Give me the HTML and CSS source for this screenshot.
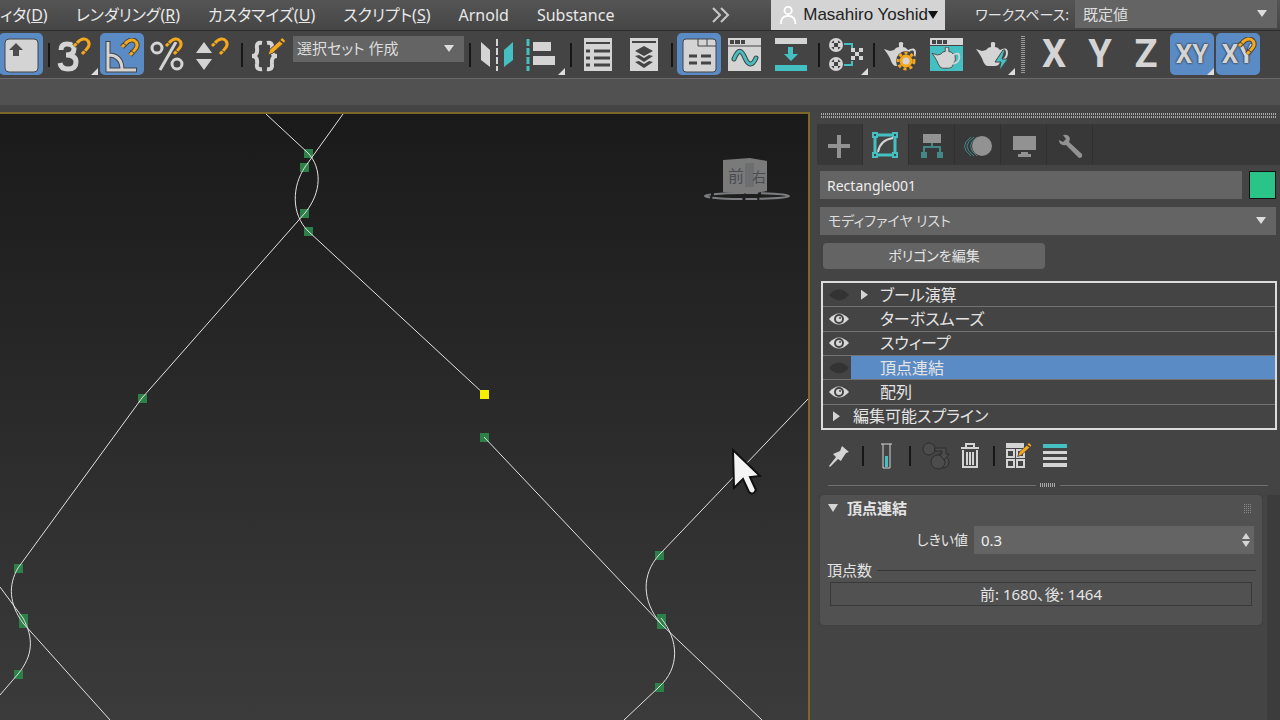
FILE: index.html
```html
<!DOCTYPE html>
<html lang="ja">
<head>
  <meta charset="UTF-8">
  <meta name="viewport" content="width=device-width, initial-scale=1.0">
  <title>Rectangle001</title>
  <link rel="stylesheet" href="styles.css">
</head>
<body>
  <!-- shared icon parts -->
  <svg class="defs" aria-hidden="true">
    <symbol id="magnet" viewBox="0 0 20 20">
      <path class="halo" d="M2 9 L5 6 C9 1 14 1 16 4 C19 8 16 11 10 17"/>
      <path class="magnet" d="M2 9 L5 6 C9 1 14 1 16 4 C19 8 16 11 10 17"/>
      <path class="tick" d="M3 5 L7 8 M10 12 L14 15"/>
    </symbol>
    <symbol id="pencil" viewBox="0 0 20 20">
      <path fill="#f5a81c" stroke="#444" d="M1 18 L3 12 L13 3 L17 6 L6 16 Z"/>
      <path fill="#f5a81c" d="M14 2 L16 0 L19 3 L18 5 Z"/>
    </symbol>
    <symbol id="teapot" viewBox="0 0 34 26">
      <path fill="#d4d4d4" d="M0 7 L6 9 L10 8 Q12 5 15 5 V3 Q14 0 17 0 Q20 0 19 3 V5 Q22 5 24 8 L26 9 Q28 15 24 20 Q23 24 19 24 H12 Q9 24 7 19 Q6 15 0 7 Z"/>
      <path fill="none" stroke="#d4d4d4" stroke-width="2" d="M24 9 Q31 5 31 11 Q31 17 24 19"/>
    </symbol>
    <symbol id="eye" viewBox="0 0 20 14">
      <path fill="#d8d8d8" d="M0 7 Q10 -4 20 7 Q10 18 0 7 Z"/>
      <circle cx="10" cy="7" r="5" fill="#444"/>
      <circle cx="10" cy="7" r="3" fill="#d8d8d8"/>
      <circle cx="11" cy="6" r="1" fill="#444"/>
    </symbol>
    <symbol id="eye-off" viewBox="0 0 22 14">
      <path fill="#333" d="M0 7 Q11 -5 22 7 Q11 19 0 7 Z"/>
    </symbol>
  </svg>

  <header class="menubar">
    <nav class="menus">
      <a href="#">ィタ(<u>D</u>)</a>
      <a href="#">レンダリング(<u>R</u>)</a>
      <a href="#">カスタマイズ(<u>U</u>)</a>
      <a href="#">スクリプト(<u>S</u>)</a>
      <a href="#">Arnold</a>
      <a href="#">Substance</a>
    </nav>
    <button type="button" class="more" aria-label="more">
      <svg width="20" height="18" viewBox="0 0 20 18"><path class="line" d="M2 2 L9 9 L2 16 M10 2 L17 9 L10 16"/></svg>
    </button>
    <button type="button" class="user">
      <svg width="20" height="20" viewBox="0 0 20 20"><g fill="none" stroke="#fff" stroke-width="2"><circle cx="10" cy="5" r="4"/><path d="M2 20 Q2 11 10 11 Q18 11 18 20"/></g></svg>
      <span class="user-name">Masahiro Yoshid</span>
      <i class="arrow dark"></i>
    </button>
    <label class="workspace-label" for="workspace">ワークスペース:</label>
    <div class="select workspace">
      <select id="workspace"><option>既定値</option></select>
    </div>
  </header>

  <div class="toolbar">
    <button type="button" class="tool first on" aria-label="viewport">
      <svg viewBox="0 0 44 42"><rect x="6" y="6" width="33" height="33" rx="4" fill="#d4d4d4" stroke="#444"/><path fill="#4c4c4c" d="M17 10 L24 17 H20 V23 H14 V17 H10 Z"/></svg>
    </button>
    <i class="sep"></i>
    <button type="button" class="tool" aria-label="snap">
      <svg viewBox="0 0 44 42"><path class="fat" d="M7 17 Q7 11 13 11 Q20 11 20 16 Q20 22 12 22 Q22 22 22 29 Q22 36 14 36 Q7 36 6 30"/><use href="#magnet" x="18" y="4" width="20" height="20"/><path class="corner" d="M44 35 V42 H37 Z"/></svg>
    </button>
    <button type="button" class="tool on" aria-label="angle snap">
      <svg viewBox="0 0 44 42"><path class="halo" d="M8 8 V37 H37 M8 22 Q22 22 22 37"/><path class="pale" d="M8 9 V37 H36 M8 22 Q22 22 22 37"/><use href="#magnet" x="20" y="5" width="20" height="20"/></svg>
    </button>
    <button type="button" class="tool" aria-label="percent snap">
      <svg viewBox="0 0 44 42"><g fill="none" stroke="#d4d4d4" stroke-width="3"><circle cx="11" cy="15" r="5"/><circle cx="31" cy="31" r="5"/><path d="M30 9 L14 37"/></g><use href="#magnet" x="18" y="4" width="20" height="20"/></svg>
    </button>
    <button type="button" class="tool" aria-label="spinner snap">
      <svg viewBox="0 0 44 42"><path fill="#d4d4d4" d="M4 20 H20 L12 9 Z M4 26 H20 L12 37 Z"/><use href="#magnet" x="18" y="4" width="20" height="20"/></svg>
    </button>
    <i class="sep"></i>
    <button type="button" class="tool" aria-label="named selection">
      <svg viewBox="0 0 44 42"><g fill="none" stroke="#d4d4d4" stroke-width="4"><path d="M15 10 Q9 9 10 15 Q11 23 5 23 Q11 23 10 31 Q9 37 15 36"/><path d="M20 10 Q26 9 25 15 Q24 23 30 23 Q24 23 25 31 Q26 37 20 36"/></g><use href="#pencil" x="20" y="5" width="19" height="19"/></svg>
    </button>
    <div class="select selection-set">
      <select aria-label="選択セット"><option>選択セット 作成</option></select>
    </div>
    <i class="sep"></i>
    <button type="button" class="tool" aria-label="mirror">
      <svg viewBox="0 0 44 42"><path fill="#d4d4d4" d="M6 9 L15 17 V34 L6 27 Z"/><path fill="#45c0c2" d="M38 9 L29 17 V34 L38 27 Z"/><path stroke="#d4d4d4" stroke-width="2" stroke-dasharray="7 2" d="M22 6 V38"/></svg>
    </button>
    <button type="button" class="tool" aria-label="align">
      <svg viewBox="0 0 44 42"><path stroke="#45c0c2" stroke-width="3" stroke-dasharray="7 2" d="M7 6 V38"/><path fill="#d4d4d4" d="M12 9 H30 V18 H12 Z M12 23 H34 V32 H12 Z"/><path class="corner" d="M44 35 V42 H37 Z"/></svg>
    </button>
    <i class="sep"></i>
    <button type="button" class="tool" aria-label="scene explorer">
      <svg viewBox="0 0 44 42"><path fill="#d4d4d4" d="M8 5 H36 V38 H8 Z"/><path stroke="#444" stroke-width="2" d="M10 10 H34"/><path stroke="#444" stroke-width="3" d="M10 18 H14 M18 18 H34 M10 25 H14 M18 25 H34 M10 32 H14 M18 32 H34"/></svg>
    </button>
    <button type="button" class="tool" aria-label="layer explorer">
      <svg viewBox="0 0 44 42"><path fill="#d4d4d4" d="M8 5 H36 V38 H8 Z"/><path stroke="#444" stroke-width="2" d="M10 9 H34"/><path fill="#444" d="M22 13 L31 18 L22 23 L13 18 Z M13 23 L17 22 L22 25 L27 22 L31 23 L22 29 Z M13 29 L17 28 L22 31 L27 28 L31 29 L22 35 Z"/></svg>
    </button>
    <i class="sep"></i>
    <button type="button" class="tool on" aria-label="ribbon">
      <svg viewBox="0 0 44 42"><rect x="6" y="6" width="33" height="33" rx="3" fill="#d4d4d4" stroke="#444"/><path fill="none" stroke="#444" d="M21 6 V13 H39 M30 6 V13"/><path stroke="#444" stroke-width="3" d="M12 23 H20 M24 23 H34 M12 30 H20 M24 30 H34"/></svg>
    </button>
    <button type="button" class="tool" aria-label="curve editor">
      <svg viewBox="0 0 44 42"><path fill="#d4d4d4" d="M5 5 H38 V38 H5 Z"/><path fill="#444" d="M7 7 H11 V11 H7 Z M12 7 H17 V11 H12 Z M18 7 H22 V11 H18 Z"/><path stroke="#444" d="M5 13 H38"/><g fill="none" stroke-linecap="round"><path stroke="#444" stroke-width="5" d="M11 26 C16 14 19 18 22 25 C25 32 29 34 33 25"/><path stroke="#45c0c2" stroke-width="3" d="M11 26 C16 14 19 18 22 25 C25 32 29 34 33 25"/></g></svg>
    </button>
    <button type="button" class="tool" aria-label="schematic">
      <svg viewBox="0 0 44 42"><path fill="#d4d4d4" d="M6 5 H38 V11 H6 Z"/><path fill="#45c0c2" d="M6 32 H38 V38 H6 Z M19 14 H24 V21 H29 L22 28 L15 21 H19 Z"/></svg>
    </button>
    <i class="sep"></i>
    <button type="button" class="tool" aria-label="material editor">
      <svg viewBox="0 0 44 42"><g fill="#444" stroke="#d4d4d4" stroke-width="2"><circle cx="12" cy="12" r="6"/><circle cx="12" cy="31" r="6"/></g><path fill="#d4d4d4" d="M10 7 H14 V17 H10 Z M7 10 H17 V14 H7 Z M10 26 H14 V36 H10 Z M7 29 H17 V33 H7 Z"/><path fill="#444" d="M10 10 H14 V14 H10 Z M10 29 H14 V33 H10 Z"/><path fill="none" stroke="#45c0c2" stroke-width="2" d="M20 11 H28 V15 M20 32 H28 V28"/><path fill="#d4d4d4" d="M27 15h4v4h-4z M35 15h4v4h-4z M31 19h4v4h-4z M27 23h4v4h-4z M35 23h4v4h-4z"/><path class="corner" d="M44 35 V42 H37 Z"/></svg>
    </button>
    <i class="sep"></i>
    <button type="button" class="tool" aria-label="render setup">
      <svg viewBox="0 0 44 42"><use href="#teapot" x="5" y="9" width="34" height="26"/><circle cx="27" cy="28" r="10" fill="#444"/><circle cx="27" cy="28" r="8" fill="none" stroke="#f5a81c" stroke-width="3" stroke-dasharray="3 3"/><circle cx="27" cy="28" r="5" fill="#d4d4d4" stroke="#f5a81c" stroke-width="3"/></svg>
    </button>
    <button type="button" class="tool" aria-label="rendered frame">
      <svg viewBox="0 0 44 42"><path fill="#d4d4d4" d="M5 5 H38 V12 H5 Z"/><path fill="#444" d="M7 7 H11 V11 H7 Z M12 7 H17 V11 H12 Z M18 7 H22 V11 H18 Z"/><path fill="#45c0c2" d="M5 13 H38 V38 H5 Z"/><use href="#teapot" x="6" y="14" width="32" height="23" stroke="#444" stroke-width="1"/></svg>
    </button>
    <button type="button" class="tool" aria-label="render">
      <svg viewBox="0 0 44 42"><use href="#teapot" x="5" y="9" width="34" height="26"/><path fill="#45c0c2" stroke="#444" d="M32 17 L24 29 H30 L28 38 L37 26 H31 L34 17 Z"/><path class="corner" d="M44 35 V42 H37 Z"/></svg>
    </button>
    <i class="grip-v"></i>
    <button type="button" class="tool axis">X</button>
    <button type="button" class="tool axis">Y</button>
    <button type="button" class="tool axis">Z</button>
    <button type="button" class="tool axis small on">XY<svg class="over" viewBox="0 0 44 42"><path class="corner" d="M44 35 V42 H37 Z"/></svg></button>
    <button type="button" class="tool axis small on">XY<svg class="over" viewBox="0 0 44 42"><use href="#magnet" x="21" y="4" width="20" height="20"/></svg></button>
  </div>

  <div class="ribbon"></div>

  <main class="workspace-area">
    <section class="viewport">
      <svg class="scene" viewBox="0 114 808 606" preserveAspectRatio="xMinYMin slice">
        <path class="knots" d="M304 149h9v9h-9z M300 163h9v9h-9z M300 209h9v9h-9z M304 227h9v9h-9z
          M138 394h9v9h-9z M14 564h9v9h-9z M19 614h9v9h-9z M19 619h9v9h-9z M14 670h9v9h-9z
          M480 433h9v9h-9z M655 551h9v9h-9z M657 614h9v9h-9z M657 620h9v9h-9z M655 683h9v9h-9z"/>
        <g class="spline">
          <path d="M266 114 L308 153 C322 168 322 192 305 213 L142 398 L18 568 C8 585 9 604 23 623 L110 720"/>
          <path d="M343 114 L305 167 C292 186 291 214 308 231 L484 394"/>
          <path d="M484 437 L661 624 L762 720"/>
          <path d="M808 399 L659 555 C642 574 641 600 661 624"/>
          <path d="M661 618 C679 640 680 668 659 687 L624 720"/>
          <path d="M0 587 L23 618 C34 638 33 656 18 674 L0 695"/>
        </g>
        <path class="picked" d="M480 390h9v9h-9z"/>
        <g class="viewcube">
          <ellipse cx="747" cy="196" rx="42" ry="3" fill="none" stroke="#7c7e81" stroke-width="2" stroke-dasharray="30 2 12 3"/>
          <path fill="#7a7a7a" d="M723 160 L750 158 L767 161 V191 L751 194 L723 192 Z"/>
          <path fill="#6c6e70" d="M745 163 h9 v24 h-9 z"/>
          <text x="728" y="182">前</text>
          <text x="752" y="182" class="side">右</text>
        </g>
        <path class="cursor" d="M733 450 L734 488 L743 479 L749 492 Q753 496 756 490 L750 477 L760 476 Z"/>
      </svg>
    </section>

    <aside class="panel">
      <div class="grip-h"></div>
      <div class="tabs">
        <button type="button" class="tab" aria-label="create"><svg viewBox="0 0 46 40"><path stroke="#929292" stroke-width="4" d="M22 10 V33 M11 21 H33"/></svg></button>
        <button type="button" class="tab active" aria-label="modify"><svg viewBox="0 0 46 40"><path fill="none" stroke="#45c0c2" stroke-width="3" d="M12 10 H32 V30 H12 Z"/><path fill="#444" stroke="#45c0c2" stroke-width="2" d="M10 8h4v4h-4z M30 8h4v4h-4z M10 28h4v4h-4z M30 28h4v4h-4z"/><path fill="none" stroke="#d4d4d4" stroke-width="2" d="M15 27 Q17 15 30 13"/></svg></button>
        <button type="button" class="tab" aria-label="hierarchy"><svg viewBox="0 0 46 40"><path fill="#929292" d="M14 9 H32 V18 H14 Z"/><path fill="none" stroke="#438687" stroke-width="2" d="M23 18 V22 M15 27 V22 H31 V27"/><path fill="#438687" d="M12 27h6v6h-6z M28 27h6v6h-6z"/></svg></button>
        <button type="button" class="tab" aria-label="motion"><svg viewBox="0 0 46 40"><g fill="none" stroke="#438687" stroke-width="1"><path d="M19 12 Q5 21 19 31 M22 12 Q9 21 22 31 M16 12 Q3 21 16 31"/></g><circle cx="27" cy="21" r="10" fill="#929292"/></svg></button>
        <button type="button" class="tab" aria-label="display"><svg viewBox="0 0 46 40"><path fill="#929292" d="M12 11 H35 V25 H12 Z M20 27 H27 V29 H30 V32 H17 V29 H20 Z"/></svg></button>
        <button type="button" class="tab" aria-label="utilities"><svg viewBox="0 0 46 40"><path fill="#929292" d="M16 10 Q22 9 23 14 L22 17 L35 29 Q36 33 32 33 L19 20 Q12 21 12 15 L16 17 L19 14 Z"/></svg></button>
      </div>

      <div class="row name-row">
        <input type="text" class="field" aria-label="name" value="Rectangle001">
        <button type="button" class="swatch" aria-label="color"></button>
      </div>
      <div class="select modifiers">
        <select aria-label="モディファイヤ リスト"><option>モディファイヤ リスト</option></select>
      </div>
      <button type="button" class="preset">ポリゴンを編集</button>

      <ul class="stack">
        <li><svg class="eye"><use href="#eye-off"/></svg><i class="arrow right"></i><span>ブール演算</span></li>
        <li><svg class="eye"><use href="#eye"/></svg><span>ターボスムーズ</span></li>
        <li><svg class="eye"><use href="#eye"/></svg><span>スウィープ</span></li>
        <li class="selected"><svg class="eye"><use href="#eye-off"/></svg><span>頂点連結</span></li>
        <li><svg class="eye"><use href="#eye"/></svg><span>配列</span></li>
        <li class="base"><i class="arrow right"></i><span>編集可能スプライン</span></li>
      </ul>

      <div class="stack-tools">
        <button type="button" aria-label="pin"><svg width="22" height="26" viewBox="0 0 22 26"><path fill="#d4d4d4" d="M14 3 L21 9 L18 10 L14 16 L13 18 L10 16 L2 24 L1 23 L8 14 L5 11 L12 8 Z"/></svg></button>
        <i class="sep"></i>
        <button type="button" aria-label="show result"><svg width="22" height="26" viewBox="0 0 22 26"><path fill="none" stroke="#d4d4d4" d="M6 1 H17 M8 1 V25 H15 V1"/><path fill="#45c0c2" d="M10 13 H13 V24 H10 Z"/></svg></button>
        <i class="sep"></i>
        <button type="button" aria-label="make unique"><svg width="28" height="28" viewBox="0 0 28 28"><g fill="#4c4c4c" stroke="#2d2d2d" stroke-width="1"><circle cx="7" cy="7" r="6"/><circle cx="21" cy="20" r="6"/><circle cx="16" cy="20" r="7"/><path d="M13 6 H24 V12 H27 L22 18 L17 12 H20 V9 H13 Z"/></g></svg></button>
        <button type="button" aria-label="delete"><svg width="22" height="26" viewBox="0 0 22 26"><path fill="none" stroke="#d4d4d4" stroke-width="2" d="M2 5 H20 M7 4 V1 H15 V4 M4 7 V24 H18 V7 M8 9 V22 M11 9 V22 M14 9 V22"/></svg></button>
        <i class="sep"></i>
        <button type="button" aria-label="configure"><svg width="28" height="26" viewBox="0 0 28 26"><path fill="#d4d4d4" d="M0 0 H18 V5 H0 Z"/><path fill="none" stroke="#d4d4d4" stroke-width="2" d="M1 7h7v7h-7z M11 7h7v7h-7z M1 17h7v7h-7z M11 17h7v7h-7z"/><use href="#pencil" x="11" y="0" width="15" height="15"/></svg></button>
        <button type="button" aria-label="list"><svg width="24" height="26" viewBox="0 0 24 26"><path fill="#45c0c2" d="M0 1 H24 V5 H0 Z"/><path fill="#d4d4d4" d="M0 8h24v3H0z M0 14h24v3H0z M0 20h24v4H0z"/></svg></button>
      </div>

      <div class="divider"><i></i></div>

      <div class="rollouts">
        <section class="rollout">
          <h2><i class="arrow"></i><span>頂点連結</span><i class="grip-dots"></i></h2>
          <div class="row threshold">
            <label for="threshold">しきい値</label>
            <div class="spinner">
              <input type="text" class="field" id="threshold" value="0.3">
              <i class="arrow up"></i>
              <i class="arrow down"></i>
            </div>
          </div>
          <fieldset>
            <legend>頂点数</legend>
            <output class="count">前: 1680、後: 1464</output>
          </fieldset>
        </section>
        <div class="scrolltrack"></div>
      </div>
    </aside>
  </main>
</body>
</html>
```
FILE: styles.css
```css
* {
  box-sizing: border-box;
}
body {
  margin: 0;
  height: 100vh;
  display: flex;
  flex-direction: column;
  overflow: hidden;
  background: #444;
  color: #e4e4e4;
  font-family: "Noto Sans", "Noto Sans CJK JP", sans-serif;
  font-size: 15px;
  line-height: 20px;
  font-feature-settings: "palt";
}
button, input, select {
  font: inherit;
  font-feature-settings: inherit;
  color: inherit;
  border: 0;
  padding: 0;
  margin: 0;
  background: none;
}
svg {
  display: block;
}
.defs {
  position: absolute;
  width: 0;
  height: 0;
}

/* icon strokes */
.halo, .magnet, .tick, .fat, .pale, .line {
  fill: none;
}
.halo {
  stroke: #444;
  stroke-width: 5;
}
.magnet {
  stroke: #f5a81c;
  stroke-width: 3;
}
.tick {
  stroke: #444;
  stroke-width: 1;
}
.fat {
  stroke: #d4d4d4;
  stroke-width: 5;
}
.pale {
  stroke: #d4d4d4;
  stroke-width: 3;
}
.line {
  stroke: #c8c8c8;
  stroke-width: 2;
}
.corner {
  fill: #ddd;
}

.arrow {
  flex: none;
  width: 10px;
  height: 8px;
  background: #d4d4d4;
  clip-path: polygon(0 0, 100% 0, 50% 100%);
}
.arrow.dark {
  background: #111;
}
.arrow.right {
  width: 7px;
  height: 10px;
  clip-path: polygon(0 0, 100% 50%, 0 100%);
}

.select {
  position: relative;
  background: #646464;
}
.select select {
  appearance: none;
  width: 100%;
  height: 100%;
  padding: 0 24px 0 8px;
  color: #ddd;
}
.select::after {
  content: "";
  position: absolute;
  right: 10px;
  top: 50%;
  margin-top: -4px;
  width: 10px;
  height: 7px;
  background: #ddd;
  clip-path: polygon(0 0, 100% 0, 50% 100%);
  pointer-events: none;
}

/* menu bar */
.menubar {
  flex: none;
  height: 31px;
  display: flex;
  align-items: center;
  border-bottom: 1px solid #2c2c2c;
  background: linear-gradient(#555, #464646);
}
.menus {
  flex: 1;
  display: flex;
  gap: 28px;
  font-size: 16px;
  white-space: nowrap;
}
.menus a {
  color: #e8e8e8;
  text-decoration: none;
}
.more {
  margin-right: 40px;
}
.user {
  width: 174px;
  height: 30px;
  padding: 0 7px 0 8px;
  display: flex;
  align-items: center;
  background: #d4d4d4;
  color: #222;
  font-family: "Liberation Sans", sans-serif;
  font-size: 17px;
}
.user-name {
  flex: 1;
  margin-left: 6px;
  white-space: nowrap;
  text-align: left;
}
.workspace-label {
  width: 130px;
  padding-right: 6px;
  font-size: 14px;
  text-align: right;
}
.workspace {
  width: 202px;
  height: 28px;
  margin: 0 3px 2px 0;
}

/* main toolbar */
.toolbar {
  flex: none;
  height: 47px;
  display: flex;
  gap: 2px;
  padding-top: 2px;
}
.tool {
  position: relative;
  flex: none;
  width: 44px;
  height: 42px;
  border-radius: 5px;
}
.tool svg {
  width: 44px;
  height: 42px;
}
.tool.first {
  margin-left: -1px;
}
.tool.on {
  background: #5b8bc5;
}
.tool .over {
  position: absolute;
  left: 0;
  top: 0;
}
.sep {
  flex: none;
  width: 7px;
  height: 24px;
  margin-top: 10px;
  background: linear-gradient(#161616, #161616) center / 2px 100% no-repeat;
}
.selection-set {
  width: 171px;
  height: 26px;
  margin-top: 3px;
}
.selection-set select {
  padding: 0 24px 3px 4px;
}
.grip-v {
  width: 13px;
  height: 38px;
  margin-top: 3px;
  background: repeating-linear-gradient(#999 0 1px, transparent 1px 2px) 4px 0 / 4px 100% no-repeat;
}
.axis {
  font-family: Roboto, sans-serif;
  font-weight: bold;
  font-size: 38px;
  line-height: 42px;
  color: #d4d4d4;
}
.axis.small {
  font-size: 26px;
  text-shadow: 0 0 2px #333, 0 0 2px #333;
}
.ribbon {
  flex: none;
  height: 27px;
  background: #515151;
  border-top: 1px solid #6a6a6a;
}

/* viewport */
.workspace-area {
  flex: 1;
  display: flex;
  min-height: 0;
  padding-top: 7px;
}
.viewport {
  flex: 1;
  min-width: 0;
  border-top: 2px solid #7d662a;
  border-right: 2px solid #7d662a;
  background: linear-gradient(#1a1a1a, #3b3b3b);
}
.scene {
  width: 100%;
  height: 100%;
}
.spline {
  fill: none;
  stroke: #e2e2e2;
  stroke-width: 1;
}
.knots {
  fill: #2c8048;
}
.picked {
  fill: #f5f000;
}
.viewcube {
  fill: #4a4d50;
  font-size: 16px;
}
.viewcube .side {
  font-size: 14px;
}
.cursor {
  fill: #f4f4f4;
  stroke: #111;
  stroke-width: 2;
}

/* command panel */
.panel {
  flex: none;
  width: 470px;
  padding: 0 0 0 10px;
  display: flex;
  flex-direction: column;
}
.grip-h {
  flex: none;
  height: 5px;
  margin: 1px 3px 6px 0;
  background: repeating-linear-gradient(90deg, #444 0 1px, transparent 1px 2px), linear-gradient(#aaa 0 2px, transparent 2px 3px, #aaa 3px 5px);
}
.tabs {
  flex: none;
  height: 41px;
  display: flex;
  margin-left: -3px;
  background: #383838;
}
.tab {
  width: 46px;
  height: 41px;
  border-right: 1px solid #303030;
}
.tab svg {
  width: 46px;
  height: 40px;
}
.tab.active {
  background: #444;
}
.row {
  display: flex;
}
.field {
  width: 100%;
  min-width: 0;
  height: 28px;
  padding: 0 7px;
  background: #646464;
  color: #eee;
}
.name-row {
  gap: 7px;
  margin: 6px 4px 8px 0;
  font-size: 14px;
}
.swatch {
  flex: none;
  width: 27px;
  height: 28px;
  background: #2bc488;
  border: 1px solid #111;
}
.modifiers {
  flex: none;
  height: 28px;
  margin-right: 4px;
  font-size: 14px;
}
.preset {
  flex: none;
  width: 222px;
  height: 26px;
  margin: 8px 0 12px 3px;
  border-radius: 4px;
  background: #646464;
  font-size: 14px;
}

.stack {
  flex: none;
  height: 149px;
  margin: 0 3px 0 1px;
  padding: 0;
  display: flex;
  flex-direction: column;
  list-style: none;
  border: 2px solid #dcdcdc;
  font-size: 16px;
}
.stack li {
  flex: 1;
  display: grid;
  grid-template-columns: 28px 29px 1fr;
  align-items: center;
  border-top: 1px solid #727272;
}
.stack li:first-child {
  border-top: 0;
}
.stack span {
  grid-column: 3;
}
.stack .arrow {
  margin-left: 10px;
}
.eye {
  width: 20px;
  height: 14px;
  margin-left: 6px;
}
.stack .selected {
  background: linear-gradient(90deg, #444 28px, #5b8bc5 28px);
}
.stack .base {
  grid-template-columns: 30px 1fr;
}
.stack .base span {
  grid-column: 2;
}

.stack-tools {
  flex: none;
  display: flex;
  align-items: center;
  gap: 9px;
  height: 28px;
  margin: 12px 0 0 8px;
}
.stack-tools .sep {
  margin-top: 0;
  height: 20px;
}
.divider {
  flex: none;
  height: 4px;
  margin: 13px 12px 8px 8px;
  display: flex;
  align-items: center;
  gap: 4px;
}
.divider::before, .divider::after {
  content: "";
  flex: 1;
  height: 1px;
  background: #707070;
}
.divider i {
  width: 16px;
  height: 4px;
  background: repeating-linear-gradient(90deg, #aaa 0 1px, #444 1px 2px);
}
.rollouts {
  flex: 1;
  display: flex;
  align-items: flex-start;
  gap: 5px;
  min-height: 0;
}
.rollout {
  flex: 1;
  padding: 3px 8px 19px;
  border-radius: 4px;
  background: #515151;
  box-shadow: 0 0 1px #333;
}
.rollout h2 {
  display: flex;
  align-items: center;
  gap: 9px;
  margin: 0 0 8px;
  font-size: 15px;
  line-height: 20px;
}
.rollout h2 span {
  flex: 1;
}
.grip-dots {
  width: 9px;
  height: 9px;
  margin-right: 2px;
  background: repeating-linear-gradient(90deg, #515151 0 1px, transparent 1px 2px), repeating-linear-gradient(#888 0 1px, #515151 1px 2px);
}
.threshold {
  align-items: center;
  justify-content: flex-end;
  gap: 6px;
}
.threshold label {
  font-size: 14px;
}
.spinner {
  position: relative;
  width: 280px;
}
.spinner .arrow {
  position: absolute;
  right: 4px;
  width: 8px;
  height: 6px;
}
.spinner .up {
  top: 7px;
  clip-path: polygon(50% 0, 100% 100%, 0 100%);
}
.spinner .down {
  top: 15px;
}
fieldset {
  margin: 6px -2px 0 -1px;
  padding: 0;
  border: 0;
  border-top: 1px solid #363636;
}
legend {
  padding: 0 5px 0 0;
}
.count {
  display: block;
  margin: 2px 4px 0 3px;
  height: 24px;
  line-height: 22px;
  border: 1px solid #383838;
  text-align: center;
}
.scrolltrack {
  width: 13px;
  height: 100%;
  background: #3c3c3c;
}
```
